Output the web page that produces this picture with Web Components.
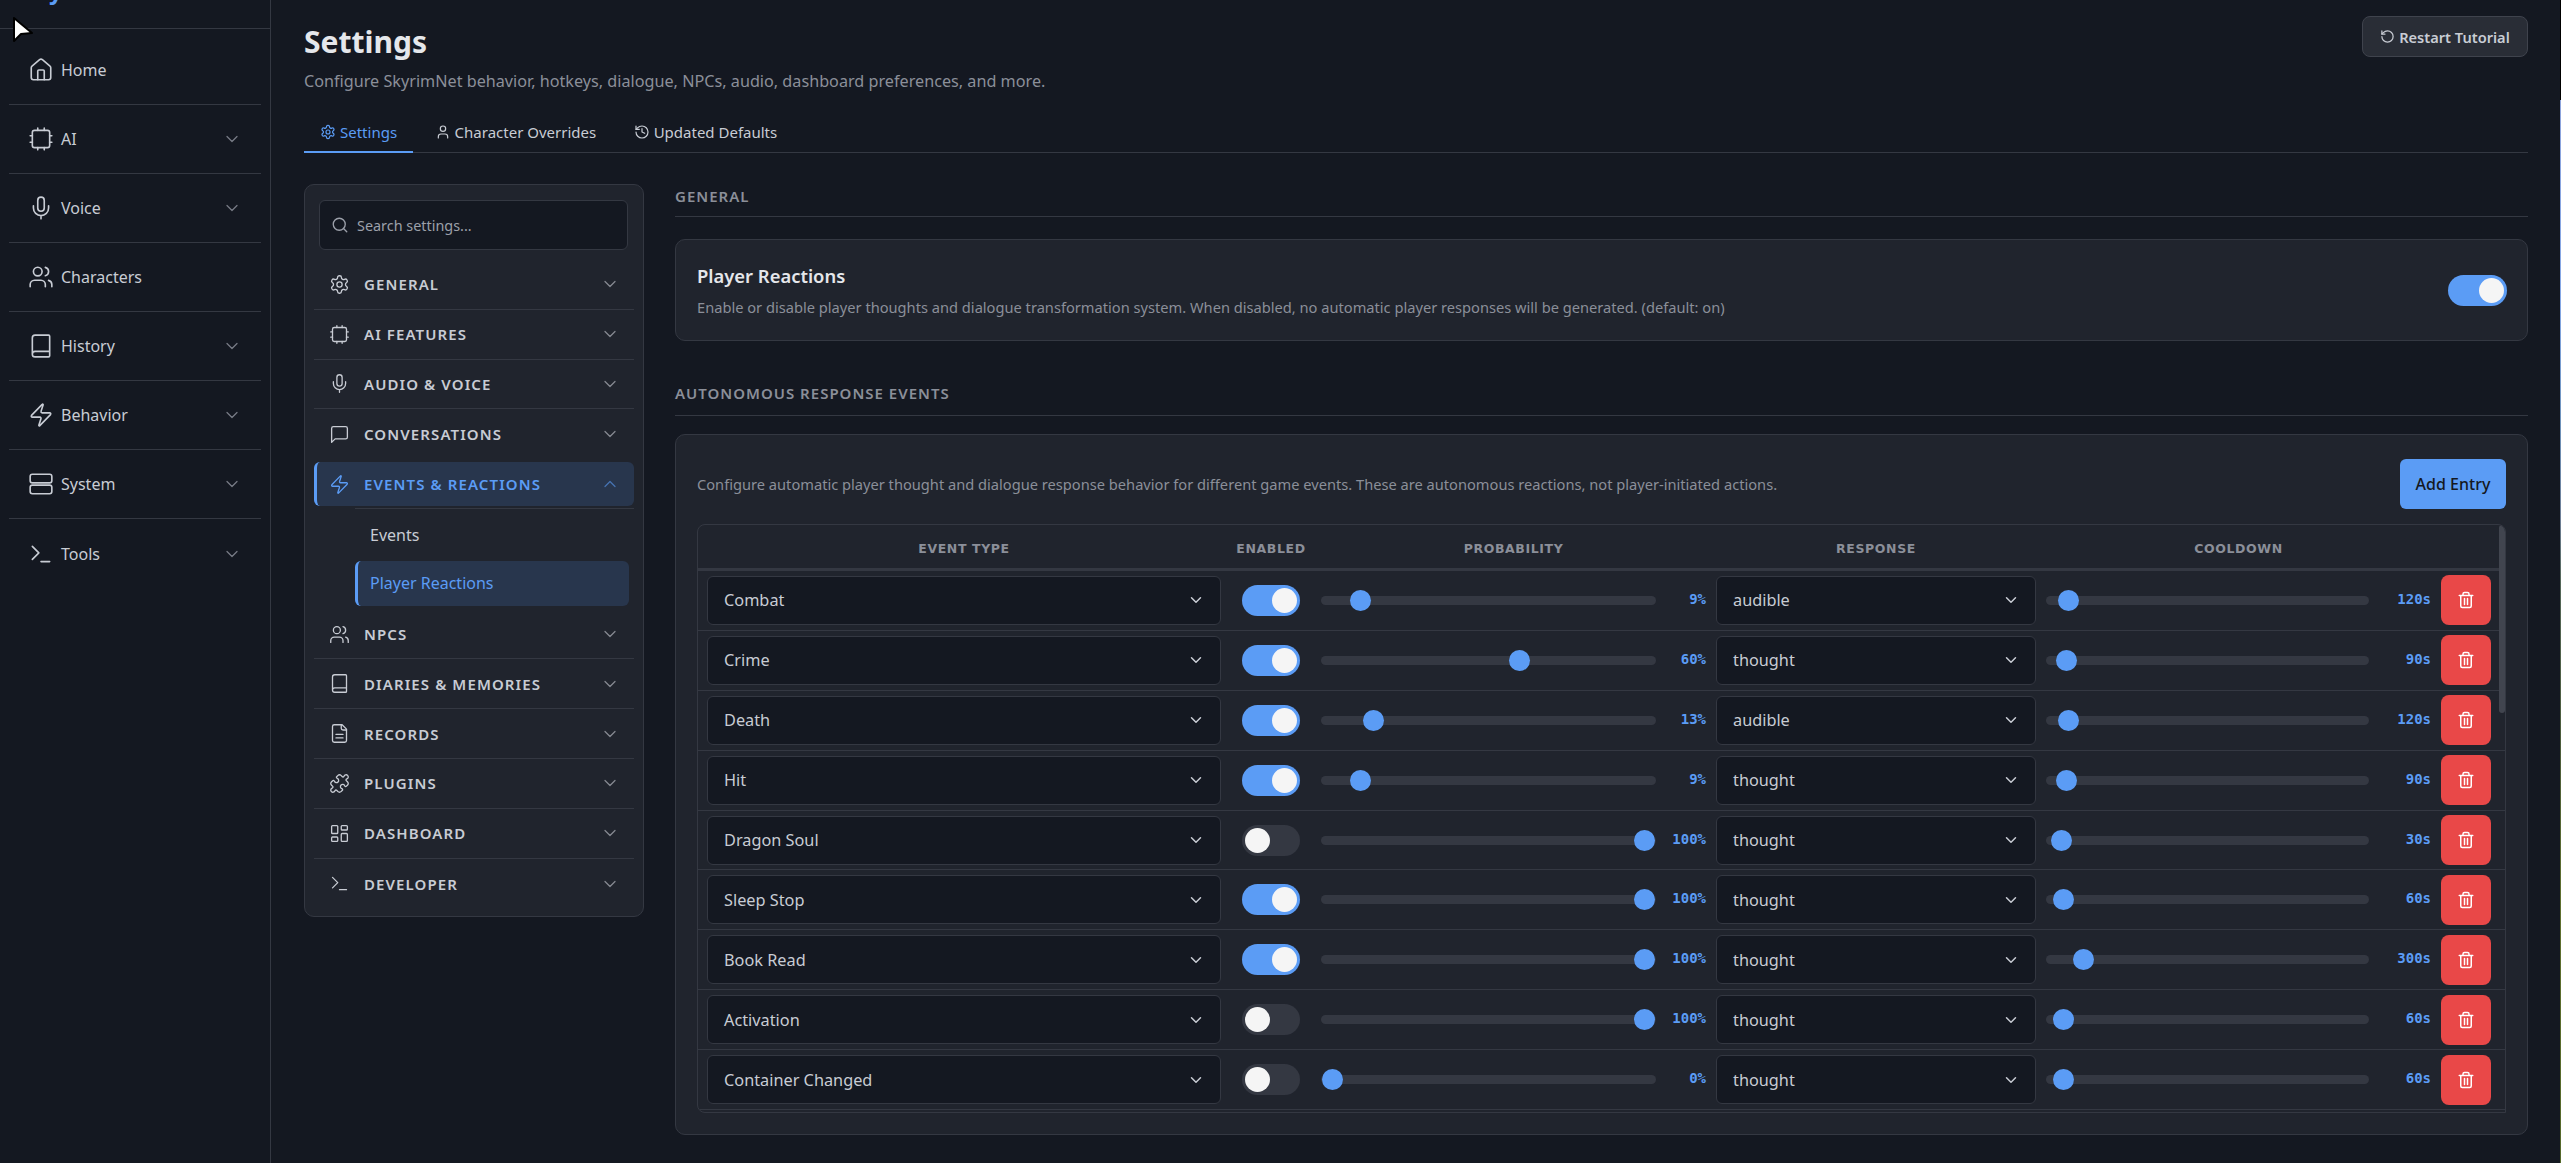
<!DOCTYPE html>
<html lang="en">
<head>
<meta charset="utf-8">
<title>Settings</title>
<style>
  html, body { margin: 0; height: 100%; background: #141821; overflow: hidden; }
  body { font-family: "Noto Sans", "Open Sans", sans-serif; color: #d1d5db; }
</style>
</head>
<body>
<app-shell>
  <side-nav slot="nav">
    <nav-item icon="home" label="Home"></nav-item>
    <nav-item icon="cpu" label="AI" more></nav-item>
    <nav-item icon="mic" label="Voice" more></nav-item>
    <nav-item icon="users" label="Characters"></nav-item>
    <nav-item icon="book" label="History" more></nav-item>
    <nav-item icon="bolt" label="Behavior" more></nav-item>
    <nav-item icon="server" label="System" more></nav-item>
    <nav-item icon="terminal" label="Tools" more last></nav-item>
  </side-nav>
  <page-header></page-header>
  <tab-bar></tab-bar>
  <div class="body">
    <settings-menu></settings-menu>
    <div class="content">
      <section-title first>GENERAL</section-title>
      <setting-card></setting-card>
      <section-title>AUTONOMOUS RESPONSE EVENTS</section-title>
      <events-card></events-card>
    </div>
  </div>
</app-shell>
<desktop-edge></desktop-edge>
<mouse-cursor></mouse-cursor>

<script>
// lucide icons, all on a 24 box
const ICONS = {
  home: '<path d="M15 21v-8a1 1 0 0 0-1-1h-4a1 1 0 0 0-1 1v8"/><path d="M3 10a2 2 0 0 1 .709-1.528l7-5.999a2 2 0 0 1 2.582 0l7 5.999A2 2 0 0 1 21 10v9a2 2 0 0 1-2 2H5a2 2 0 0 1-2-2z"/>',
  cpu: '<rect x="4" y="4" width="16" height="16" rx="2"/><path d="M9 2v2M15 2v2M9 20v2M15 20v2M2 9h2M2 15h2M20 9h2M20 15h2"/>',
  mic: '<path d="M12 2a3 3 0 0 0-3 3v7a3 3 0 0 0 6 0V5a3 3 0 0 0-3-3Z"/><path d="M19 10v2a7 7 0 0 1-14 0v-2M12 19v3"/>',
  users: '<path d="M16 21v-2a4 4 0 0 0-4-4H6a4 4 0 0 0-4 4v2"/><circle cx="9" cy="7" r="4"/><path d="M22 21v-2a4 4 0 0 0-3-3.87M16 3.13a4 4 0 0 1 0 7.75"/>',
  book: '<path d="M4 19.5v-15A2.5 2.5 0 0 1 6.5 2H19a1 1 0 0 1 1 1v18a1 1 0 0 1-1 1H6.5a1 1 0 0 1 0-5H20"/>',
  bolt: '<path d="M4 14a1 1 0 0 1-.78-1.63l9.9-10.2a.5.5 0 0 1 .86.46l-1.92 6.02A1 1 0 0 0 13 10h7a1 1 0 0 1 .78 1.63l-9.9 10.2a.5.5 0 0 1-.86-.46l1.92-6.02A1 1 0 0 0 11 14z"/>',
  server: '<rect x="2" y="3" width="20" height="8" rx="2"/><rect x="2" y="13" width="20" height="8" rx="2"/>',
  terminal: '<path d="m4 17 6-6-6-6M12 19h8"/>',
  gear: '<path d="M12.22 2h-.44a2 2 0 0 0-2 2v.18a2 2 0 0 1-1 1.73l-.43.25a2 2 0 0 1-2 0l-.15-.08a2 2 0 0 0-2.73.73l-.22.38a2 2 0 0 0 .73 2.73l.15.1a2 2 0 0 1 1 1.72v.51a2 2 0 0 1-1 1.74l-.15.09a2 2 0 0 0-.73 2.73l.22.38a2 2 0 0 0 2.73.73l.15-.08a2 2 0 0 1 2 0l.43.25a2 2 0 0 1 1 1.73V20a2 2 0 0 0 2 2h.44a2 2 0 0 0 2-2v-.18a2 2 0 0 1 1-1.73l.43-.25a2 2 0 0 1 2 0l.15.08a2 2 0 0 0 2.73-.73l.22-.39a2 2 0 0 0-.73-2.73l-.15-.08a2 2 0 0 1-1-1.74v-.5a2 2 0 0 1 1-1.74l.15-.09a2 2 0 0 0 .73-2.73l-.22-.38a2 2 0 0 0-2.73-.73l-.15.08a2 2 0 0 1-2 0l-.43-.25a2 2 0 0 1-1-1.73V4a2 2 0 0 0-2-2z"/><circle cx="12" cy="12" r="3"/>',
  chat: '<path d="M21 15a2 2 0 0 1-2 2H7l-4 4V5a2 2 0 0 1 2-2h14a2 2 0 0 1 2 2z"/>',
  file: '<path d="M15 2H6a2 2 0 0 0-2 2v16a2 2 0 0 0 2 2h12a2 2 0 0 0 2-2V7z"/><path d="M14 2v4a2 2 0 0 0 2 2h4M16 13H8M16 17H8"/>',
  puzzle: '<path d="M19.439 7.85c-.049.322.059.648.289.878l1.568 1.568c.47.47.706 1.087.706 1.704s-.235 1.233-.706 1.704l-1.611 1.611a.98.98 0 0 1-.837.276c-.47-.07-.802-.48-.968-.925a2.501 2.501 0 1 0-3.214 3.214c.446.166.855.497.925.968a.979.979 0 0 1-.276.837l-1.61 1.61a2.404 2.404 0 0 1-1.705.707 2.402 2.402 0 0 1-1.704-.706l-1.568-1.568a1.026 1.026 0 0 0-.877-.29c-.493.074-.84.504-1.02.968a2.5 2.5 0 1 1-3.237-3.237c.464-.18.894-.527.967-1.02a1.026 1.026 0 0 0-.289-.877l-1.568-1.568A2.402 2.402 0 0 1 1.998 12c0-.617.236-1.234.706-1.704L4.23 8.77c.24-.24.581-.353.917-.303.515.077.877.528 1.073 1.01a2.5 2.5 0 1 0 3.259-3.259c-.482-.196-.933-.558-1.01-1.073-.05-.336.062-.676.303-.917l1.525-1.525A2.402 2.402 0 0 1 12 1.998c.617 0 1.234.236 1.704.706l1.568 1.568c.23.23.556.338.877.29.493-.074.84-.504 1.02-.968a2.5 2.5 0 1 1 3.237 3.237c-.464.18-.894.527-.967 1.02Z"/>',
  grid: '<rect x="3" y="3" width="7" height="9" rx="1"/><rect x="14" y="3" width="7" height="5" rx="1"/><rect x="14" y="12" width="7" height="9" rx="1"/><rect x="3" y="16" width="7" height="5" rx="1"/>',
  search: '<circle cx="11" cy="11" r="8"/><path d="m21 21-4.3-4.3"/>',
  user: '<path d="M19 21v-2a4 4 0 0 0-4-4H9a4 4 0 0 0-4 4v2"/><circle cx="12" cy="7" r="4"/>',
  history: '<path d="M3 12a9 9 0 1 0 9-9 9.75 9.75 0 0 0-6.74 2.74L3 8"/><path d="M3 3v5h5M12 7v5l4 2"/>',
  restart: '<path d="M3 12a9 9 0 1 0 9-9 9.75 9.75 0 0 0-6.74 2.74L3 8"/><path d="M3 3v5h5"/>',
  down: '<path d="m6 9 6 6 6-6"/>',
  up: '<path d="m18 15-6-6-6 6"/>',
  trash: '<path d="M3 6h18M19 6v14a2 2 0 0 1-2 2H7a2 2 0 0 1-2-2V6M8 6V4a2 2 0 0 1 2-2h4a2 2 0 0 1 2 2v2M10 10v8M14 10v8"/>'
}

function icon(name, size, width = 2) {
  return `<svg width="${size}" height="${size}" viewBox="0 0 24 24" fill="none" stroke="currentColor" stroke-width="${width}" stroke-linecap="round" stroke-linejoin="round">${ICONS[name]}</svg>`
}

// small helper so every element below is just a class with a template string
function define(tag, html) {
  customElements.define(tag, class extends HTMLElement {
    constructor() {
      super()
      this.attachShadow({ mode: 'open' })
    }
    connectedCallback() {
      this.shadowRoot.innerHTML = typeof html === 'function' ? html(this) : html
    }
  })
}

define('app-shell', `
  <style>
    :host { display: grid; grid-template-columns: 271px 1fr; height: 1163px; overflow: hidden; }
    .nav { border-right: 1px solid #343842; }
    main { padding: 0 33px; min-width: 0; }
  </style>
  <div class="nav"><slot name="nav"></slot></div>
  <main><slot></slot></main>
`)

define('side-nav', `
  <style>
    :host { display: block; }
    .brand { height: 28px; border-bottom: 1px solid #343842; overflow: hidden; display: flex; align-items: flex-end; padding-left: 21px; }
    .brand span { font: 700 24px/24px "Noto Sans", sans-serif; color: #5b9cf5; margin-bottom: 26px; }
    .items { padding: 7px 9px 0; }
  </style>
  <div class="brand"><span>SkyrimNet</span></div>
  <div class="items"><slot></slot></div>
`)

define('nav-item', el => `
  <style>
    :host { display: flex; align-items: center; height: 69px; border-bottom: 1px solid #343842; box-sizing: border-box; padding: 0 19px 0 18px; color: #c8ccd4; font-size: 16px; }
    :host([last]) { border-bottom: 0; }
    .ic { width: 27px; display: flex; justify-content: center; color: #c8ccd4; }
    .tx { margin-left: 7px; flex: 1; }
    .ch { display: flex; color: #777b85; }
  </style>
  <span class="ic">${icon(el.getAttribute('icon'), 26, 1.5)}</span>
  <span class="tx">${el.getAttribute('label')}</span>
  ${el.hasAttribute('more') ? `<span class="ch">${icon('down', 20, 1.5)}</span>` : ''}
`)

define('page-header', `
  <style>
    :host { display: flex; justify-content: space-between; align-items: flex-start; height: 110px; }
    h1 { font: 700 30px/36px "Noto Sans", sans-serif; color: #e5e7eb; margin: 24px 0 0; }
    p { font-size: 16.2px; line-height: 20px; color: #8b8f99; margin: 11px 0 0; }
    button { all: unset; box-sizing: border-box; display: flex; align-items: center; gap: 4px; margin-top: 16px; height: 41px; width: 166px; justify-content: center; background: #292d36; border: 1px solid #3f434d; border-radius: 8px; color: #c8ccd4; font: 600 14.6px "Noto Sans", sans-serif; }
  </style>
  <div>
    <h1>Settings</h1>
    <p>Configure SkyrimNet behavior, hotkeys, dialogue, NPCs, audio, dashboard preferences, and more.</p>
  </div>
  <button>${icon('restart', 15, 2)}Restart Tutorial</button>
`)

define('tab-bar', `
  <style>
    :host { display: flex; gap: 5.5px; height: 43px; border-bottom: 1px solid #343842; box-sizing: border-box; font-size: 15px; }
    a { display: flex; align-items: center; gap: 4px; padding: 2px 16px 0; color: #c8ccd4; margin-bottom: -1px; border-bottom: 2px solid transparent; box-sizing: border-box; }
    a.on { color: #5b9cf5; border-bottom-color: #5b9cf5; }
  </style>
  <a class="on">${icon('gear', 16, 1.8)}Settings</a>
  <a>${icon('user', 16, 1.8)}Character Overrides</a>
  <a>${icon('history', 16, 1.8)}Updated Defaults</a>
`)

define('settings-menu', `
  <style>
    :host { display: block; width: 340px; height: 733px; box-sizing: border-box; background: #20242d; border: 1px solid #343842; border-radius: 10px; padding: 15px 9px 0; flex: none; }
    .search { display: flex; align-items: center; gap: 8px; height: 50px; box-sizing: border-box; margin: 0 6px 10px 5px; padding: 0 11px; background: #141821; border: 1px solid #343842; border-radius: 6px; color: #9ca0aa; font-size: 14.4px; }
    .sub { margin: 2px 0 4px 41px; border-top: 1px solid #343842; }
    .sub div { height: 51.5px; display: flex; align-items: center; padding-left: 15px; font-size: 16px; color: #c8ccd4; box-sizing: border-box; }
    .sub .on { height: 45px; width: 274px; background: #28364d; color: #5b9cf5; border-left: 3px solid #5b9cf5; border-radius: 6px; padding-left: 12px; }
  </style>
  <div class="search">${icon('search', 18, 1.8)}<span>Search settings...</span></div>
  <menu-item icon="gear" label="GENERAL"></menu-item>
  <menu-item icon="cpu" label="AI FEATURES"></menu-item>
  <menu-item icon="mic" label="AUDIO &amp; VOICE"></menu-item>
  <menu-item icon="chat" label="CONVERSATIONS" noline></menu-item>
  <menu-item icon="bolt" label="EVENTS &amp; REACTIONS" active></menu-item>
  <div class="sub"><div>Events</div><div class="on">Player Reactions</div></div>
  <menu-item icon="users" label="NPCS"></menu-item>
  <menu-item icon="book" label="DIARIES &amp; MEMORIES"></menu-item>
  <menu-item icon="file" label="RECORDS"></menu-item>
  <menu-item icon="puzzle" label="PLUGINS"></menu-item>
  <menu-item icon="grid" label="DASHBOARD"></menu-item>
  <menu-item icon="terminal" label="DEVELOPER" noline></menu-item>
`)

define('menu-item', el => `
  <style>
    :host { display: flex; align-items: center; height: 49.8px; box-sizing: border-box; border-bottom: 1px solid #343842; padding: 0 14px 0 14.5px; color: #c8ccd4; font: 600 15px "Noto Sans", sans-serif; letter-spacing: 1.1px; }
    :host([active]) { height: 44px; margin-top: 3px; border: 0; background: #28364d; color: #5b9cf5; border-left: 3px solid #5b9cf5; border-radius: 6px; padding-left: 11.5px; }
    :host([noline]) { border-bottom: 0; }
    .ic { width: 21px; display: flex; justify-content: center; }
    .tx { margin-left: 14.5px; flex: 1; }
    .ch { display: flex; opacity: .6; }
  </style>
  <span class="ic">${icon(el.getAttribute('icon'), 21, 1.5)}</span>
  <span class="tx">${el.getAttribute('label')}</span>
  <span class="ch">${icon(el.hasAttribute('active') ? 'up' : 'down', 20, 1.5)}</span>
`)

define('section-title', `
  <style>
    :host { display: block; height: 33px; border-bottom: 1px solid #343842; color: #8b8f99; font: 600 15px/25px "Noto Sans", sans-serif; letter-spacing: 1px; box-sizing: border-box; margin-bottom: 22px; }
    :host(:not([first])) { margin-top: 39px; height: 36px; line-height: 27px; margin-bottom: 18px; }
  </style>
  <slot></slot>
`)

define('toggle-switch', el => `
  <style>
    :host { display: inline-block; width: ${el.hasAttribute('big') ? 59 : 58}px; height: 31px; border-radius: 16px; background: ${el.hasAttribute('on') ? '#5b9cf5' : '#343842'}; position: relative; flex: none; }
    i { position: absolute; top: 3px; width: 25px; height: 25px; border-radius: 50%; background: #f5f5f5; ${el.hasAttribute('on') ? 'right: 3px' : 'left: 3px'}; }
  </style>
  <i></i>
`)

define('setting-card', `
  <style>
    :host { display: flex; align-items: center; justify-content: space-between; height: 102px; box-sizing: border-box; background: #20242d; border: 1px solid #343842; border-radius: 10px; padding: 0 20px 0 21px; }
    b { display: block; font: 600 18.4px/24px "Noto Sans", sans-serif; color: #e5e7eb; }
    p { margin: 9px 0 0; font-size: 14.65px; line-height: 20px; color: #8b8f99; }
  </style>
  <div>
    <b>Player Reactions</b>
    <p>Enable or disable player thoughts and dialogue transformation system. When disabled, no automatic player responses will be generated. (default: on)</p>
  </div>
  <toggle-switch on big></toggle-switch>
`)

define('events-card', `
  <style>
    :host { display: block; height: 701px; box-sizing: border-box; background: #20242d; border: 1px solid #343842; border-radius: 10px; padding: 24px 21px 0; }
    .top { display: flex; align-items: center; justify-content: space-between; height: 50px; margin-bottom: 15px; }
    .top p { margin: 0; font-size: 14.65px; color: #8b8f99; }
    button { all: unset; width: 106px; height: 50px; display: flex; align-items: center; justify-content: center; background: #5b9cf5; color: #141821; border-radius: 6px; font: 500 16px "Noto Sans", sans-serif; }
    .table { position: relative; height: 589px; box-sizing: border-box; border: 1px solid #343842; border-radius: 8px 8px 0 8px; overflow: hidden; }
    .bar { position: absolute; top: 0; right: 0; width: 6px; height: 188px; background: #41454f; border-radius: 3px; }
  </style>
  <div class="top">
    <p>Configure automatic player thought and dialogue response behavior for different game events. These are autonomous reactions, not player-initiated actions.</p>
    <button>Add Entry</button>
  </div>
  <div class="table">
    <table-head></table-head>
    <event-row type="Combat" on prob="9" resp="audible" cool="120"></event-row>
    <event-row type="Crime" on prob="60" resp="thought" cool="90"></event-row>
    <event-row type="Death" on prob="13" resp="audible" cool="120"></event-row>
    <event-row type="Hit" on prob="9" resp="thought" cool="90"></event-row>
    <event-row type="Dragon Soul" prob="100" resp="thought" cool="30"></event-row>
    <event-row type="Sleep Stop" on prob="100" resp="thought" cool="60"></event-row>
    <event-row type="Book Read" on prob="100" resp="thought" cool="300"></event-row>
    <event-row type="Activation" prob="100" resp="thought" cool="60"></event-row>
    <event-row type="Container Changed" prob="0" resp="thought" cool="60"></event-row>
    <div class="bar"></div>
  </div>
`)

const ROW_COLUMNS = '514px 100px 385px 330px 395px 60px'

define('table-head', `
  <style>
    :host { display: grid; grid-template-columns: ${ROW_COLUMNS}; align-items: center; height: 46px; box-sizing: border-box; padding: 3px 0 0 9px; border-bottom: 3px solid #343842; color: #8b8f99; font: 600 12.5px "DejaVu Sans", sans-serif; letter-spacing: .6px; text-align: center; }
    .r { padding-left: 10px; }
  </style>
  <span>EVENT TYPE</span><span>ENABLED</span><span>PROBABILITY</span><span class="r">RESPONSE</span><span class="r">COOLDOWN</span><span></span>
`)

define('fake-select', `
  <style>
    :host { display: flex; align-items: center; justify-content: space-between; height: 49px; box-sizing: border-box; padding: 0 15px 0 16px; background: #141821; border: 1px solid #343842; border-radius: 6px; color: #c8ccd4; font-size: 16.3px; }
    span { display: flex; color: #c8ccd4; }
  </style>
  <slot></slot><span>${icon('down', 18, 2)}</span>
`)

define('range-slider', el => `
  <style>
    :host { display: flex; align-items: center; gap: 8px; min-width: 0; }
    input { -webkit-appearance: none; appearance: none; flex: 1; min-width: 0; margin: 0; height: 22px; background: transparent; }
    input::-webkit-slider-runnable-track { height: 9px; background: #343842; border-radius: 5px; }
    input::-webkit-slider-thumb { -webkit-appearance: none; width: 21px; height: 21px; margin-top: -6px; border-radius: 50%; background: #5b9cf5; }
    output { width: ${el.getAttribute('w')}px; text-align: right; color: #5b9cf5; font: 700 14px "DejaVu Sans Mono", monospace; padding-bottom: 3px; }
  </style>
  <input type="range" step="any" min="${el.getAttribute('min')}" max="${el.getAttribute('max')}" value="${el.getAttribute('value')}">
  <output>${el.getAttribute('value')}${el.getAttribute('unit')}</output>
`)

define('event-row', el => `
  <style>
    :host { display: grid; grid-template-columns: ${ROW_COLUMNS}; align-items: center; height: 59.9px; box-sizing: border-box; padding-left: 9px; border-bottom: 1px solid #343842; }
    .c { display: flex; justify-content: center; }
    .r { padding-left: 10px; }
    button { all: unset; width: 50px; height: 50px; margin-left: 10px; display: flex; align-items: center; justify-content: center; background: #e94848; border-radius: 8px; color: #fff; }
  </style>
  <fake-select>${el.getAttribute('type')}</fake-select>
  <div class="c"><toggle-switch ${el.hasAttribute('on') ? 'on' : ''}></toggle-switch></div>
  <range-slider min="-0.4" max="100.4" w="42" value="${el.getAttribute('prob')}" unit="%"></range-slider>
  <fake-select style="margin-left:10px">${el.getAttribute('resp')}</fake-select>
  <range-slider class="r" min="-27" max="3600" w="54" value="${el.getAttribute('cool')}" unit="s"></range-slider>
  <button>${icon('trash', 18, 2)}</button>
`)

// the sliver of the desktop wallpaper that shows at the right edge of the capture
define('desktop-edge', `
  <style>
    :host { position: fixed; right: 0; top: 0; width: 1px; height: 1163px; background: linear-gradient(#000 0 100px, #8ea4dc 100px, #86a8e6 300px, #6f93bc 420px, #6f7f96 520px, #55675a 580px, #4c5c3c 740px, #5f7030 900px, #55682c 1163px); }
  </style>
`)

define('mouse-cursor', `
  <style>
    :host { position: fixed; left: 11px; top: 15px; width: 24px; height: 30px; z-index: 10; }
  </style>
  <svg width="24" height="30" viewBox="0 0 24 30"><path d="M3 3v23l7-7 11-1z" fill="#fff" stroke="#000" stroke-width="2" stroke-linejoin="round"/></svg>
`)
</script>
<style>
  app-shell > .body { display: flex; gap: 31px; margin-top: 31px; }
  app-shell .content { flex: 1; min-width: 0; }
</style>
</body>
</html>
